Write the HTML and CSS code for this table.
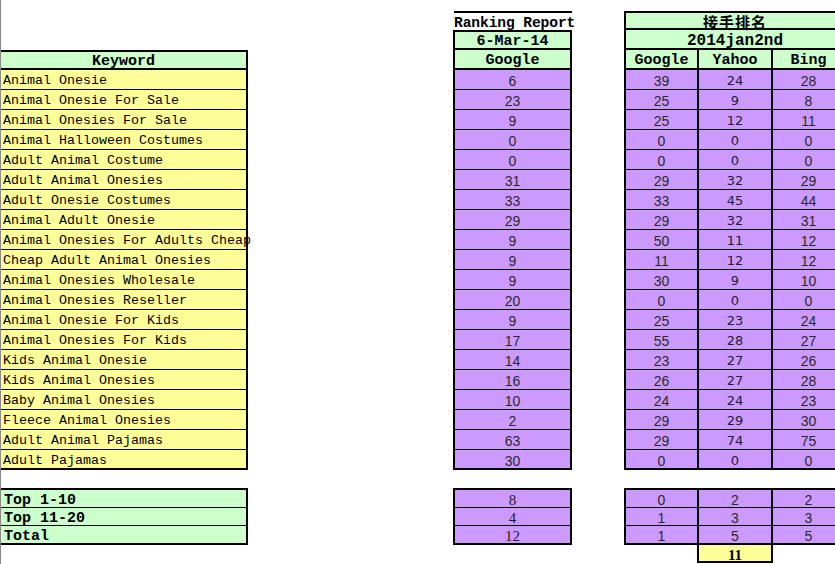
FILE: index.html
```html
<!DOCTYPE html>
<html>
<head>
<meta charset="utf-8">
<link rel="stylesheet" href="styles.css">
</head>
<body>
<div class="sheet">
  <section class="col-kw">
    <div class="blk kw-blk">
      <div class="hdr h-b">Keyword</div>
      <div class="row">Animal Onesie</div>
      <div class="row">Animal Onesie For Sale</div>
      <div class="row">Animal Onesies For Sale</div>
      <div class="row">Animal Halloween Costumes</div>
      <div class="row">Adult Animal Costume</div>
      <div class="row">Adult Animal Onesies</div>
      <div class="row">Adult Onesie Costumes</div>
      <div class="row">Animal Adult Onesie</div>
      <div class="row">Animal Onesies For Adults Cheap</div>
      <div class="row">Cheap Adult Animal Onesies</div>
      <div class="row">Animal Onesies Wholesale</div>
      <div class="row">Animal Onesies Reseller</div>
      <div class="row">Animal Onesie For Kids</div>
      <div class="row">Animal Onesies For Kids</div>
      <div class="row">Kids Animal Onesie</div>
      <div class="row">Kids Animal Onesies</div>
      <div class="row">Baby Animal Onesies</div>
      <div class="row">Fleece Animal Onesies</div>
      <div class="row">Adult Animal Pajamas</div>
      <div class="row">Adult Pajamas</div>
    </div>
    <div class="blk sum kw-sum">
      <div class="srow">Top 1-10</div>
      <div class="srow">Top 11-20</div>
      <div class="srow">Total</div>
    </div>
  </section>

  <section class="col-mid">
    <div class="title">Ranking Report</div>
    <div class="blk mid-blk">
      <div class="hdr h-a">6-Mar-14</div>
      <div class="hdr h-b">Google</div>
      <div class="row num">6</div>
      <div class="row num">23</div>
      <div class="row num">9</div>
      <div class="row num">0</div>
      <div class="row num">0</div>
      <div class="row num">31</div>
      <div class="row num">33</div>
      <div class="row num">29</div>
      <div class="row num">9</div>
      <div class="row num">9</div>
      <div class="row num">9</div>
      <div class="row num">20</div>
      <div class="row num">9</div>
      <div class="row num">17</div>
      <div class="row num">14</div>
      <div class="row num">16</div>
      <div class="row num">10</div>
      <div class="row num">2</div>
      <div class="row num">63</div>
      <div class="row num">30</div>
    </div>
    <div class="blk sum mid-sum">
      <div class="srow snum">8</div>
      <div class="srow snum">4</div>
      <div class="srow snum">12</div>
    </div>
  </section>

  <section class="col-right">
    <div class="blk right-blk">
      <div class="hdr h-top cjk">接手排名</div>
      <div class="hdr h-a date">2014jan2nd</div>
      <div class="hdr h-b cells"><span>Google</span><span>Yahoo</span><span>Bing</span></div>
      <div class="row cells"><span>39</span><span>24</span><span>28</span></div>
      <div class="row cells"><span>25</span><span>9</span><span>8</span></div>
      <div class="row cells"><span>25</span><span>12</span><span>11</span></div>
      <div class="row cells"><span>0</span><span>0</span><span>0</span></div>
      <div class="row cells"><span>0</span><span>0</span><span>0</span></div>
      <div class="row cells"><span>29</span><span>32</span><span>29</span></div>
      <div class="row cells"><span>33</span><span>45</span><span>44</span></div>
      <div class="row cells"><span>29</span><span>32</span><span>31</span></div>
      <div class="row cells"><span>50</span><span>11</span><span>12</span></div>
      <div class="row cells"><span>11</span><span>12</span><span>12</span></div>
      <div class="row cells"><span>30</span><span>9</span><span>10</span></div>
      <div class="row cells"><span>0</span><span>0</span><span>0</span></div>
      <div class="row cells"><span>25</span><span>23</span><span>24</span></div>
      <div class="row cells"><span>55</span><span>28</span><span>27</span></div>
      <div class="row cells"><span>23</span><span>27</span><span>26</span></div>
      <div class="row cells"><span>26</span><span>27</span><span>28</span></div>
      <div class="row cells"><span>24</span><span>24</span><span>23</span></div>
      <div class="row cells"><span>29</span><span>29</span><span>30</span></div>
      <div class="row cells"><span>29</span><span>74</span><span>75</span></div>
      <div class="row cells"><span>0</span><span>0</span><span>0</span></div>
    </div>
    <div class="blk sum right-sum">
      <div class="srow cells"><span>0</span><span>2</span><span>2</span></div>
      <div class="srow cells"><span>1</span><span>3</span><span>3</span></div>
      <div class="srow cells"><span>1</span><span>5</span><span>5</span></div>
    </div>
    <div class="total-box">11</div>
  </section>
</div>
</body>
</html>
```

FILE: styles.css
```css
html, body {
  margin: 0;
  padding: 0;
}
body {
  width: 835px;
  height: 564px;
  overflow: hidden;
  background: #fff;
  border-left: 1px solid #8a8a8a;
  box-sizing: border-box;
  font-family: "Liberation Mono", "DejaVu Sans Mono", monospace;
  color: #000;
}
.sheet {
  display: flex;
  align-items: flex-start;
}
.blk {
  border: 2px solid #000;
  box-sizing: border-box;
}
.hdr {
  height: 16px;
  line-height: 20px;
  border-bottom: 2px solid #000;
  background: #ccffcc;
  text-align: center;
  font-weight: bold;
  font-size: 15px;
  white-space: nowrap;
  overflow: visible;
}
.mid-blk .h-b,
.right-blk .h-a,
.right-blk .h-b {
  height: 18px;
  line-height: 22px;
}
.hdr.h-top {
  height: 15px;
  line-height: 17px;
}
.row {
  height: 19px;
  line-height: 22px;
  border-bottom: 1px solid #000;
  white-space: nowrap;
  font-size: 13.33px;
}
.row:last-child {
  height: 18px;
  border-bottom: none;
}

/* keyword column */
.col-kw {
  width: 247px;
  flex: none;
  padding-top: 50px;
}
.kw-blk {
  border-left: none;
}
.kw-blk .row {
  background: #ffff99;
  padding-left: 2px;
}
.sum {
  margin-top: 18px;
}
.srow {
  height: 17px;
  line-height: 21px;
  border-bottom: 1px solid #000;
  white-space: nowrap;
}
.srow:last-child {
  border-bottom: none;
}
.kw-sum {
  border-left: none;
  background: #ccffcc;
}
.kw-sum .srow {
  font-weight: bold;
  font-size: 15px;
  padding-left: 3px;
}

/* middle column */
.col-mid {
  width: 119px;
  flex: none;
  margin-left: 205px;
  padding-top: 11px;
}
.title {
  height: 17px;
  line-height: 21px;
  border-top: 2px solid #000;
  margin-left: 1px;
  text-align: center;
  font-weight: bold;
  font-size: 14.6px;
  white-space: nowrap;
  letter-spacing: -0.1px;
}
.mid-blk .row,
.mid-sum {
  background: #cc99ff;
}
.num {
  text-align: center;
  font-family: "Liberation Sans", Arial, sans-serif;
  font-size: 14px;
  color: #2a2a2a;
}
.snum {
  text-align: center;
  font-family: "Liberation Serif", serif;
  font-size: 15px;
  color: #222;
}

/* right table */
.col-right {
  width: 222px;
  flex: none;
  margin-left: 52px;
  padding-top: 11px;
}
.cjk {
  font-family: "Noto Sans CJK SC", sans-serif;
  font-size: 15px;
  font-weight: bold;
  letter-spacing: 1px;
}
.date {
  font-size: 16px;
}
.cells {
  display: flex;
}
.cells span {
  display: block;
  text-align: center;
  box-sizing: border-box;
}
.cells span:nth-child(1) {
  width: 73px;
  border-right: 2px solid #000;
}
.cells span:nth-child(2) {
  width: 74px;
  border-right: 2px solid #000;
}
.cells span:nth-child(3) {
  flex: 1;
}
.right-blk .row,
.right-sum {
  background: #cc99ff;
}
.right-blk .row span,
.right-sum span {
  font-family: "Liberation Sans", Arial, sans-serif;
  font-size: 14px;
  color: #2a2a2a;
}
.right-blk .row span:nth-child(2) {
  font-family: "DejaVu Sans", sans-serif;
  font-size: 13px;
  color: #20203a;
}
.total-box {
  width: 76px;
  height: 20px;
  margin-top: -2px;
  margin-left: 73px;
  box-sizing: border-box;
  border: 2px solid #000;
  background: #ffff99;
  text-align: center;
  line-height: 21px;
  font-family: "Liberation Serif", serif;
  font-weight: bold;
  font-size: 15px;
}
```
